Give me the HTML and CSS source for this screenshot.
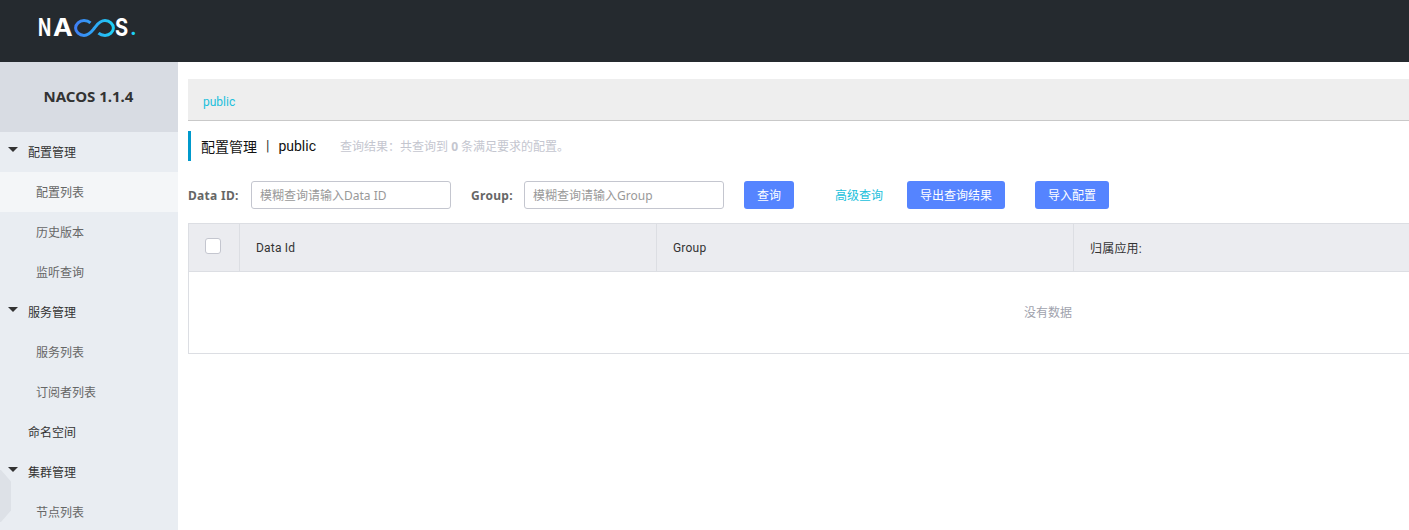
FILE: index.html
```html
<!DOCTYPE html>
<html lang="zh">
<head>
    <meta charset="UTF-8">
    <title>Nacos</title>
    <link rel="stylesheet" href="styles.css">
</head>
<body>
    <header class="topbar">
        <div class="logo">
            <span class="logo-text logo-n">N</span>
            <span class="logo-text logo-a">A</span>
            <svg class="logo-loop" width="41" height="18" viewBox="0 0 41 18">
                <defs>
                    <linearGradient id="loopGrad" x1="0" x2="1" y1="0" y2="0">
                        <stop offset="0" stop-color="#3f7ff5"/>
                        <stop offset="1" stop-color="#1ed0f5"/>
                    </linearGradient>
                </defs>
                <path d="M16.500 3.800C14.800 2.300 12.500 1.600 10 1.600 5.300 1.600 1.600 4.900 1.600 9s3.700 7.400 8.400 7.400c5.500 0 8-4.400 10.500-7.400 2.500-3 5-7.400 10.500-7.400 4.700 0 8.400 3.300 8.400 7.400s-3.700 7.400-8.400 7.400c-2.500 0-4.800-.7-6.500-2.200" fill="none" stroke="url(#loopGrad)" stroke-width="3"/>
            </svg>
            <span class="logo-text logo-s">S</span>
            <span class="logo-text logo-dot">.</span>
        </div>
    </header>

    <div class="layout">
        <aside class="sidebar">
            <div class="side-title">NACOS 1.1.4</div>
            <ul class="menu">
                <li class="menu-group"><i class="caret"></i>配置管理</li>
                <li class="menu-sub active">配置列表</li>
                <li class="menu-sub">历史版本</li>
                <li class="menu-sub">监听查询</li>
                <li class="menu-group"><i class="caret"></i>服务管理</li>
                <li class="menu-sub">服务列表</li>
                <li class="menu-sub">订阅者列表</li>
                <li class="menu-group">命名空间</li>
                <li class="menu-group"><i class="caret"></i>集群管理</li>
                <li class="menu-sub">节点列表</li>
            </ul>
            <div class="side-toggle"></div>
        </aside>

        <main class="content">
            <div class="namespace-bar"><a class="ns-link">public</a></div>

            <div class="page-title">
                <span class="page-name">配置管理</span>
                <span class="page-sep">|</span>
                <span class="page-name">public</span>
                <span class="page-result">查询结果：共查询到 <b>0</b> 条满足要求的配置。</span>
            </div>

            <form class="search-form">
                <label class="field-label">Data ID:</label>
                <input class="field-input" type="text" placeholder="模糊查询请输入Data ID">
                <label class="field-label label-group">Group:</label>
                <input class="field-input" type="text" placeholder="模糊查询请输入Group">
                <button class="btn btn-query" type="button">查询</button>
                <a class="advanced">高级查询</a>
                <button class="btn btn-export" type="button">导出查询结果</button>
                <button class="btn btn-import" type="button">导入配置</button>
            </form>

            <div class="table">
                <div class="table-head">
                    <div class="cell cell-check"><span class="checkbox"></span></div>
                    <div class="cell cell-col">Data Id</div>
                    <div class="cell cell-col">Group</div>
                    <div class="cell cell-col">归属应用:</div>
                </div>
                <div class="table-empty">没有数据</div>
            </div>
        </main>
    </div>
</body>
</html>
```

FILE: styles.css
```css
* {
    box-sizing: border-box;
}

html, body {
    margin: 0;
    height: 530px;
    overflow: hidden;
}

body {
    font-family: "Noto Sans", "Noto Sans CJK SC", sans-serif;
    font-size: 12px;
    color: #333;
    background-color: #fff;
}

.topbar {
    height: 62px;
    background-color: #252a2f;
    padding: 19px 0 0 38px;
}

.logo {
    display: flex;
    align-items: center;
    height: 18px;
}

.logo-text {
    display: block;
    font-family: "Inter", sans-serif;
    font-size: 24px;
    font-weight: 700;
    line-height: 18px;
    color: #fff;
    transform-origin: left center;
}

.logo-n {
    width: 15px;
    transform: scaleX(0.72);
}

.logo-a {
    width: 21px;
    transform: scaleX(1.1);
}

.logo-s {
    width: 15px;
    transform: scaleX(0.84);
}

.logo-dot {
    font-size: 20px;
    color: #1ed0f5;
}

.layout {
    display: flex;
    width: 1700px;
}

.sidebar {
    position: relative;
    width: 178px;
    height: 468px;
    flex-shrink: 0;
    background-color: #e9edf2;
    overflow: hidden;
}

.side-title {
    height: 70px;
    padding-right: 1px;
    line-height: 68px;
    text-align: center;
    font-size: 15px;
    font-weight: bold;
    color: #333;
    background-color: #d8dce3;
}

.menu {
    list-style: none;
    margin: 0;
    padding: 0;
}

.menu-group,
.menu-sub {
    height: 40px;
    line-height: 41px;
}

.menu-group {
    position: relative;
    padding-left: 28px;
    color: #333;
}

.menu-sub {
    padding-left: 36px;
    color: #666;
}

.menu-sub.active {
    background-color: #f4f6f8;
}

.caret {
    position: absolute;
    left: 8px;
    top: 15px;
    width: 0;
    height: 0;
    border-left: 5px solid transparent;
    border-right: 5px solid transparent;
    border-top: 5px solid #333;
}

.side-toggle {
    position: absolute;
    left: -9px;
    top: 408px;
    width: 20px;
    height: 52px;
    background-color: #dde1e7;
    clip-path: polygon(0 0, 50% 0, 100% 22%, 100% 78%, 50% 100%, 0 100%);
}

.content {
    flex: 1;
    padding: 17px 0 0 10px;
}

.namespace-bar {
    height: 42px;
    padding-left: 15px;
    line-height: 45px;
    background-color: #eee;
    border-bottom: 1px solid #c9c9c9;
}

.ns-link {
    font-family: "Roboto", sans-serif;
    color: #20c0dc;
}

.page-title {
    display: flex;
    align-items: center;
    height: 30px;
    margin-top: 10px;
    padding-left: 10px;
    border-left: 3px solid #09c;
}

.page-name {
    font-family: "Roboto", "Noto Sans CJK SC", sans-serif;
    font-size: 14px;
    color: #111;
}

.page-sep {
    margin: 0 9px;
    font-family: "Roboto", sans-serif;
    font-size: 14px;
    color: #333;
}

.page-result {
    margin-left: 24px;
    color: #c4c6cf;
}

.search-form {
    display: flex;
    align-items: center;
    height: 28px;
    margin-top: 20px;
}

.field-label {
    width: 63px;
    font-size: 12px;
    font-weight: bold;
    letter-spacing: 0.3px;
    color: #666;
}

.label-group {
    width: 53px;
    margin-left: 20px;
}

.field-input {
    width: 200px;
    height: 28px;
    padding: 0 8px;
    border: 1px solid #c4c6cf;
    border-radius: 3px;
    font: inherit;
    outline: none;
}

.field-input::placeholder {
    color: #999;
}

.btn {
    height: 28px;
    padding: 0;
    border: none;
    border-radius: 3px;
    font: inherit;
    color: #fff;
    background-color: #5584ff;
}

.btn-query {
    width: 50px;
    margin-left: 20px;
}

.advanced {
    margin-left: 41px;
    color: #20c0dc;
}

.btn-export {
    width: 98px;
    margin-left: 24px;
}

.btn-import {
    width: 74px;
    margin-left: 30px;
}

.table {
    width: 1300px;
    margin-top: 14px;
    border: 1px solid #dcdee3;
    border-right: none;
    height: 131px;
}

.table-head {
    display: flex;
    height: 48px;
    background-color: #ebecf0;
    border-bottom: 1px solid #dcdee3;
}

.cell {
    display: flex;
    flex-shrink: 0;
    align-items: center;
    border-right: 1px solid #dcdee3;
    font-family: "Roboto", "Noto Sans CJK SC", sans-serif;
    letter-spacing: 0.2px;
    color: #333;
}

.cell-check {
    width: 51px;
    padding-left: 16px;
}

.cell-col {
    width: 417px;
    padding-left: 16px;
}

.checkbox {
    width: 16px;
    height: 16px;
    margin-top: -4px;
    border: 1px solid #c4c6cf;
    border-radius: 3px;
    background-color: #fff;
}

.table-empty {
    height: 81px;
    line-height: 82px;
    text-align: center;
    width: 1718px;
    color: #a0a2ad;
}
```
